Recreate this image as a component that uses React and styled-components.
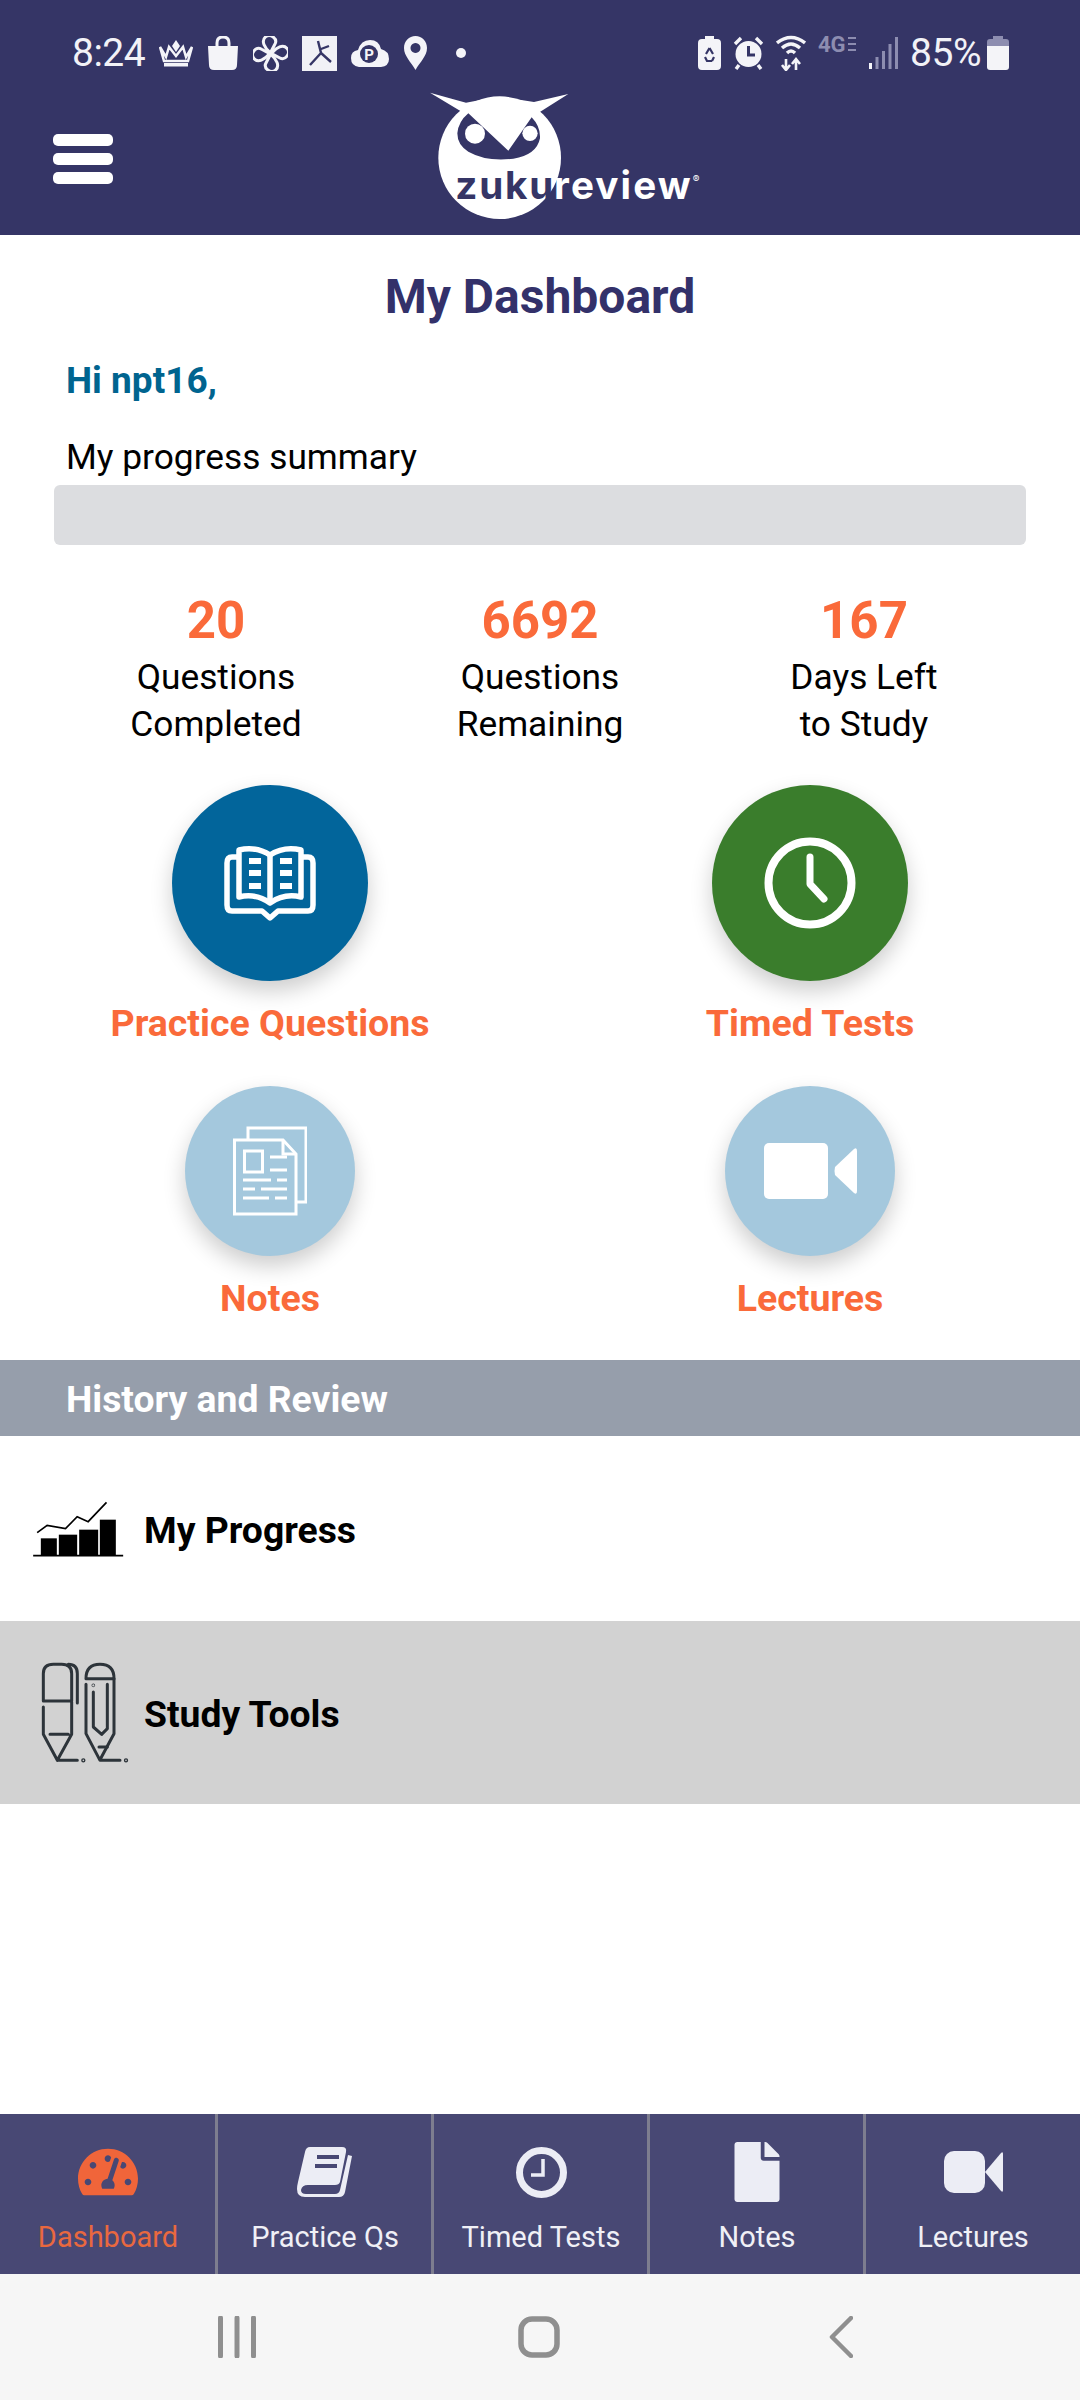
import React from 'react';
import styled, { createGlobalStyle } from 'styled-components';
import { FaTachometerAlt, FaFile } from 'react-icons/fa';

const Global = createGlobalStyle`
  html, body { margin: 0; padding: 0; background: #fff; }
  * { box-sizing: border-box; }
  body { font-family: Roboto, "Liberation Sans", sans-serif; }
`;

const Page = styled.div`
  width: 1080px; height: 2400px; display: flex; flex-direction: column; background: #fff; overflow: hidden;
`;
const Header = styled.header`
  height: 235px; background: #353566; display: flex; flex-direction: column; flex: none;
`;
const StatusBar = styled.div`
  height: 90px; padding: 34px 71px 18px 72px; display: flex; justify-content: space-between; align-items: center; color: #f4f4f8;
`;
const StatusGroup = styled.div`
  display: flex; align-items: center; gap: ${p => p.$gap || 14}px;
`;
const StatusText = styled.span`
  font-size: 39px; line-height: 38px; font-weight: 400; letter-spacing: -0.5px; color: #f2f2f7;
  margin-right: ${p => p.$tight || 0}px;
`;
const StatusSvg = styled.svg`
  display: block; flex: none;
`;
const NavRow = styled.div`
  height: 145px; display: flex; align-items: flex-start;
`;
const Burger = styled.div`
  width: 60px; margin: 44px 0 0 53px; display: flex; flex-direction: column; gap: 7px; flex: none;
`;
const BurgerBar = styled.span`
  display: block; height: 12px; border-radius: 5px; background: #fff;
`;
const LogoSvg = styled.svg`
  display: block; margin-left: 267px; flex: none;
`;
const Title = styled.h1`
  margin: 32px 0 0; font-size: 48px; line-height: 60px; font-weight: 700; text-align: center; color: #33316a;
`;
const Greeting = styled.div`
  margin: 29px 0 0 66px; font-size: 37px; line-height: 50px; font-weight: 700; color: #00648f;
`;
const Summary = styled.div`
  margin: 26px 0 0 66px; font-size: 35.3px; line-height: 50px; font-weight: 400; color: #000;
`;
const ProgressBar = styled.div`
  margin: 3px 54px 0; height: 60px; background: #dcdde0; border-radius: 6px; flex: none;
`;
const Stats = styled.div`
  margin: 48px 54px 0; display: grid; grid-template-columns: repeat(3, 1fr);
`;
const Stat = styled.div`
  text-align: center;
`;
const StatNum = styled.div`
  font-size: 51px; line-height: 56px; font-weight: 700; color: #fa6a3a;
`;
const StatLabel = styled.div`
  margin-top: 5px; font-size: 35.3px; line-height: 47px; color: #000;
`;
const Actions = styled.div`
  margin-top: 37px; display: grid; grid-template-columns: 1fr 1fr; row-gap: 38.5px;
`;
const Action = styled.div`
  display: flex; flex-direction: column; align-items: center;
`;
const Circle = styled.div`
  width: ${p => p.$size}px; height: ${p => p.$size}px; border-radius: 50%; background: ${p => p.$bg};
  box-shadow: 0 10px 22px rgba(0,0,0,.2); display: flex; align-items: center; justify-content: center;
`;
const ActionLabel = styled.div`
  margin-top: 16.5px; font-size: 37.5px; line-height: 50px; font-weight: 700; color: #fa6a3a;
`;
const SectionBar = styled.div`
  margin-top: 37.5px; height: 76px; flex: none; background: #969eab; color: #fff; padding-left: 66px;
  font-size: 37.3px; line-height: 79px; font-weight: 700;
`;
const ListRow = styled.div`
  height: ${p => p.$h}px; flex: none; display: flex; align-items: center; background: ${p => p.$bg};
  padding-left: ${p => p.$pad}px; gap: ${p => p.$gap}px;
  font-size: 37.3px; font-weight: 700; color: #000;
`;
const RowText = styled.span`
  padding-top: 2px;
`;
const Spacer = styled.div`
  flex: 1;
`;
const TabBar = styled.nav`
  height: 160px; flex: none; background: #484874; display: grid; grid-template-columns: repeat(5, 216px);
`;
const Tab = styled.div`
  display: flex; flex-direction: column; align-items: center; padding-top: 28px;
  border-left: ${p => (p.$first ? 'none' : '3px solid #7d7d8f')};
  margin-left: ${p => (p.$first ? 0 : -1)}px;
  color: ${p => (p.$active ? '#f0653a' : '#ecedf5')};
`;
const TabIcon = styled.div`
  height: 60px; display: flex; align-items: center; justify-content: center;
`;
const TabLabel = styled.div`
  margin-top: 17px; font-size: 29px; line-height: 36px;
  color: ${p => (p.$active ? '#e9683f' : '#f0f0f6')};
`;
const SystemNav = styled.div`
  height: 126px; flex: none; background: #f6f6f6; display: grid; grid-template-columns: repeat(3, 1fr);
`;
const SysSlot = styled.div`
  display: flex; align-items: center; padding-left: ${p => p.$pad}px;
`;

const ReviewLogo = () => (
  <LogoSvg width="340" height="140" viewBox="0 60 1020 420">
    <circle cx="359" cy="263" r="184" fill="#fff" />
    <path d="M150 68 L258 98 L320 86 L250 128Z" fill="#fff" />
    <path d="M565 72 L462 96 L400 86 L476 128Z" fill="#fff" />
    <path d="M265 130 L385 242 L455 142 Q482 170 480 205 Q470 255 400 266 Q320 276 265 245 Q232 225 232 190 Q235 155 265 130Z" fill="#353566" />
    <circle cx="285" cy="191" r="30" fill="#fff" />
    <circle cx="450" cy="190" r="23" fill="#fff" />
    <text x="226" y="388" fontFamily="Inter, sans-serif" fontWeight="700" fontSize="116" fill="#353566" textLength="294">zuku</text>
    <text x="522" y="388" fontFamily="Inter, sans-serif" fontWeight="700" fontSize="116" fill="#fff" textLength="410">review</text>
    <text x="938" y="340" fontFamily="Inter, sans-serif" fontSize="30" fill="#fff">®</text>
  </LogoSvg>
);

const Crown = () => (
  <StatusSvg width="34" height="28" viewBox="0 0 34 28">
    <path d="M1 8 L7 18 L10 8 L17 17 L24 8 L27 18 L33 8 L29 22 H5Z" fill="none" stroke="#f4f4f8" strokeWidth="2.5" />
    <path d="M17 1 L21 7 L17 13 L13 7Z" fill="#f4f4f8" />
    <rect x="5" y="24" width="24" height="3.5" fill="#f4f4f8" />
  </StatusSvg>
);
const Bag = () => (
  <StatusSvg width="32" height="34" viewBox="0 0 32 34">
    <path d="M10 10 V7 Q10 1 16 1 Q22 1 22 7 V10" fill="none" stroke="#f4f4f8" strokeWidth="3" />
    <path d="M1 10 H31 L30 29 Q30 34 25 34 H7 Q2 34 2 29Z" fill="#f4f4f8" />
  </StatusSvg>
);
const Fan = () => (
  <StatusSvg width="35" height="35" viewBox="0 0 35 35" fill="none" stroke="#f4f4f8" strokeWidth="3">
    <g transform="rotate(40 17.5 17.5)">
      <path d="M17 17 C9 17 2 14 3 8 C4 2 14 1 15 8 Z" />
      <path d="M18 17 C18 9 21 2 27 3 C33 4 34 14 27 15 Z" />
      <path d="M18 18 C26 18 33 21 32 27 C31 33 21 34 20 27 Z" />
      <path d="M17 18 C17 26 14 33 8 32 C2 31 1 21 8 20 Z" />
    </g>
  </StatusSvg>
);
const FigureSquare = () => (
  <StatusSvg width="35" height="35" viewBox="0 0 35 35">
    <rect width="35" height="35" fill="#f1f1f6" />
    <path d="M16 5 L19 17 L8 29 M19 17 L29 26 M19 13 L27 10" fill="none" stroke="#353566" strokeWidth="2.4" />
  </StatusSvg>
);
const CloudP = () => (
  <StatusSvg width="38" height="28" viewBox="0 0 38 28">
    <path d="M8 28 Q0 27 0 19 Q0 12 7 11 Q10 1 19 1 Q28 1 30 10 Q38 12 38 20 Q38 27 30 28Z" fill="#f4f4f8" />
    <circle cx="18" cy="15" r="9" fill="#353566" />
    <text x="18" y="20.5" textAnchor="middle" fontFamily="Roboto, sans-serif" fontWeight="700" fontSize="15" fill="#f4f4f8">P</text>
  </StatusSvg>
);
const Pin = () => (
  <StatusSvg width="25" height="34" viewBox="0 0 25 34">
    <path fillRule="evenodd" d="M12.5 34 C8 26 1 20 1 12 C1 5 6 0 12.5 0 C19 0 24 5 24 12 C24 20 17 26 12.5 34Z M12.5 7 a5 5 0 1 0 0.01 0Z" fill="#f4f4f8" />
  </StatusSvg>
);
const Dot = () => (
  <StatusSvg width="10" height="10" viewBox="0 0 10 10" style={{ marginLeft: 14 }}><circle cx="5" cy="5" r="5" fill="#f4f4f8" /></StatusSvg>
);
const BatterySaver = () => (
  <StatusSvg width="23" height="34" viewBox="0 0 23 34">
    <path d="M7 0 H16 V3 H19 Q23 3 23 7 V30 Q23 34 19 34 H4 Q0 34 0 30 V7 Q0 3 4 3 H7Z" fill="#f4f4f8" />
    <path d="M11.5 12 L8 18 M11.5 12 L15 18 M7 21 L9 25 H14 M16 21 L14 25" fill="none" stroke="#353566" strokeWidth="2.2" />
  </StatusSvg>
);
const Alarm = () => (
  <StatusSvg width="31" height="34" viewBox="0 0 31 34">
    <circle cx="15.5" cy="18" r="13" fill="#f4f4f8" />
    <path d="M15.5 10 V19 H22" fill="none" stroke="#353566" strokeWidth="3" />
    <path d="M2 8 L8 2 M29 8 L23 2 M6 29 L3 33 M25 29 L28 33" stroke="#f4f4f8" strokeWidth="3.4" />
  </StatusSvg>
);
const WifiIcon = () => (
  <StatusSvg width="30" height="36" viewBox="0 0 30 36" fill="none" stroke="#f4f4f8" strokeWidth="3.4">
    <path d="M1 8 Q15 -3 29 8" />
    <path d="M6 13 Q15 5 24 13" />
    <path d="M11 18 Q15 14 19 18" />
    <path d="M10 24 V35 M6 30 L10 35 L14 30" strokeWidth="2.6" />
    <path d="M20 35 V24 M16 29 L20 24 L24 29" strokeWidth="2.6" />
  </StatusSvg>
);
const FourG = () => (
  <StatusSvg width="39" height="24" viewBox="0 0 39 24" style={{ alignSelf: 'flex-start' }}>
    <text x="0" y="18" fontFamily="Roboto, sans-serif" fontWeight="700" fontSize="22" fill="#8d8db0">4G</text>
    <path d="M30 4 H38 M30 10 H38 M30 16 H38" stroke="#8d8db0" strokeWidth="2" />
  </StatusSvg>
);
const Signal = () => (
  <StatusSvg width="29" height="32" viewBox="0 0 29 32">
    <rect x="0" y="26" width="3" height="6" fill="#f4f4f8" />
    <rect x="6.5" y="20" width="3" height="12" fill="#8d8db0" />
    <rect x="13" y="14" width="3" height="18" fill="#8d8db0" />
    <rect x="19.5" y="7" width="3" height="25" fill="#8d8db0" />
    <rect x="26" y="0" width="3" height="32" fill="#8d8db0" />
  </StatusSvg>
);
const BatteryIcon = () => (
  <StatusSvg width="22" height="34" viewBox="0 0 22 34">
    <path d="M6 0 H16 V3 H19 Q22 3 22 6 V10 H0 V6 Q0 3 3 3 H6Z" fill="#8d8db0" />
    <path d="M0 10 H22 V31 Q22 34 19 34 H3 Q0 34 0 31Z" fill="#f4f4f8" />
  </StatusSvg>
);

const BookIcon = () => (
  <svg width="92" height="76" viewBox="0 0 92 76" fill="none" stroke="#fff" strokeWidth="5.5" strokeLinejoin="round">
    <path d="M46 10 Q32 1 15 5 V52 Q32 48 46 58 Q60 48 77 52 V5 Q60 1 46 10Z" />
    <path d="M46 10 V58" />
    <path d="M15 12 H8 Q3 12 3 18 V60 Q3 66 8 66 H38 L46 73 L54 66 H84 Q89 66 89 60 V18 Q89 12 84 12 H77" />
    <g fill="#fff" stroke="none">
      <rect x="25" y="13" width="12" height="6" /><rect x="25" y="25" width="12" height="6" /><rect x="25" y="38" width="12" height="6" />
      <rect x="56" y="13" width="12" height="6" /><rect x="56" y="25" width="12" height="6" /><rect x="56" y="38" width="12" height="6" />
    </g>
  </svg>
);
const ClockIcon = () => (
  <svg width="92" height="92" viewBox="0 0 92 92" fill="none" stroke="#fff">
    <circle cx="46" cy="46" r="41.5" strokeWidth="8" />
    <path d="M46 20 V47 L60 62" strokeWidth="7" strokeLinecap="round" strokeLinejoin="round" />
  </svg>
);
const NotesIcon = () => (
  <svg width="74" height="90" viewBox="0 0 74 90" fill="none" stroke="#fff" strokeWidth="3">
    <path d="M15 13 V2 H73 V76 H64" />
    <path d="M1.5 14 H50 L63 28 V88 H1.5Z" />
    <path d="M50 14 V28 H63" />
    <rect x="11.5" y="25" width="18" height="21" />
    <path d="M37 31 H54 M37 44 H54 M10 54 H38 M44 54 H54 M10 63 H22 M28 63 H54 M10 72 H36 M42 72 H54" />
  </svg>
);
const VideoIcon = () => (
  <svg width="93" height="56" viewBox="0 0 93 56" fill="#fff">
    <rect x="0" y="0" width="64" height="56" rx="5" />
    <path d="M71 24 L90 6 Q93 4 93 8 V48 Q93 52 90 50 L71 32 Q70 28 71 24Z" />
  </svg>
);
const ProgressIcon = () => (
  <svg width="91" height="60" viewBox="100 115 272 180">
    <rect x="123" y="233" width="48" height="52" /><rect x="177" y="222" width="55" height="63" />
    <rect x="238" y="207" width="57" height="78" /><rect x="300" y="177" width="48" height="108" />
    <path d="M100 285 H370" stroke="#000" strokeWidth="5" />
    <path d="M112 216 L142 194 L197 204 L232 168 L265 183 L320 125" fill="none" stroke="#000" strokeWidth="5" />
  </svg>
);
const ToolsIcon = () => (
  <svg width="90" height="102" viewBox="120 605 270 306" fill="none" stroke="#2d343a" strokeWidth="9" strokeLinecap="round" strokeLinejoin="round">
    <path d="M130 722 V640 Q130 612 160 612 H185 Q215 612 215 640 V722 H130" />
    <path d="M205 612 Q232 612 232 640 V728" />
    <path d="M130 740 V822 L172 900 H232 M215 725 V822 L172 900 M150 822 H205" />
    <path d="M258 655 Q258 612 300 612 Q342 612 342 655Z" />
    <path d="M258 672 V820 L300 900 H360 M342 655 V820 L300 898" />
    <path d="M280 695 V800 L305 822 L322 805 V672 M297 860 H322" />
    <circle cx="250" cy="900" r="2" /><circle cx="378" cy="900" r="2" /><circle cx="280" cy="675" r="1" />
  </svg>
);
const TabClock = () => (
  <svg width="51" height="51" viewBox="0 0 51 51" fill="none" stroke="currentColor">
    <circle cx="25.5" cy="25.5" r="22" strokeWidth="7" />
    <path d="M27 12 V28 H15" strokeWidth="3.5" />
  </svg>
);
const TabBook = () => (
  <svg width="56" height="52" viewBox="0 0 56 52">
    <path fill="currentColor" d="M13 1 H45 Q50 1 49 6 L43 36 Q42 39 38 39 H11 Q5 39 4 44 Q4 48 9 48 H38 Q42 48 43 44 L51 9 L55 10 L48 46 Q47 51 42 51 H8 Q0 51 0 43 Q0 40 1 36 L8 6 Q9 1 13 1Z" />
    <path d="M20 11 H42 M18 20 H40" stroke="#484874" strokeWidth="4" />
  </svg>
);
const TabVideo = () => (
  <svg width="59" height="42" viewBox="0 0 59 42" fill="currentColor">
    <rect x="0" y="0" width="41" height="42" rx="10" />
    <path d="M41 21 L57 2 Q59 0 59 3 V39 Q59 42 57 40Z" />
  </svg>
);

const stats = [
  ['20', 'Questions', 'Completed'],
  ['6692', 'Questions', 'Remaining'],
  ['167', 'Days Left', 'to Study'],
];
const tabs = [
  ['Dashboard', <FaTachometerAlt key="g" style={{ width: 60, height: 54 }} />],
  ['Practice Qs', <TabBook key="b" />],
  ['Timed Tests', <TabClock key="c" />],
  ['Notes', <FaFile key="f" style={{ width: 52, height: 60 }} />],
  ['Lectures', <TabVideo key="v" />],
];

export default function App() {
  return (
    <Page>
      <Global />
      <Header>
        <StatusBar>
          <StatusGroup>
            <StatusText>8:24</StatusText>
            <Crown /><Bag /><Fan /><FigureSquare /><CloudP /><Pin /><Dot />
          </StatusGroup>
          <StatusGroup $gap={12}>
            <BatterySaver /><Alarm /><WifiIcon /><FourG /><Signal />
            <StatusText $tight={-6}>85%</StatusText><BatteryIcon />
          </StatusGroup>
        </StatusBar>
        <NavRow>
          <Burger><BurgerBar /><BurgerBar /><BurgerBar /></Burger>
          <ReviewLogo />
        </NavRow>
      </Header>
      <Title>My Dashboard</Title>
      <Greeting>Hi npt16,</Greeting>
      <Summary>My progress summary</Summary>
      <ProgressBar />
      <Stats>
        {stats.map(([n, a, b]) => (
          <Stat key={n}><StatNum>{n}</StatNum><StatLabel>{a}<br />{b}</StatLabel></Stat>
        ))}
      </Stats>
      <Actions>
        <Action><Circle $size={196} $bg="#02659b"><BookIcon /></Circle><ActionLabel>Practice Questions</ActionLabel></Action>
        <Action><Circle $size={196} $bg="#3a7d2c"><ClockIcon /></Circle><ActionLabel>Timed Tests</ActionLabel></Action>
        <Action><Circle $size={170} $bg="#a4c8dd"><NotesIcon /></Circle><ActionLabel>Notes</ActionLabel></Action>
        <Action><Circle $size={170} $bg="#a4c8dd"><VideoIcon /></Circle><ActionLabel>Lectures</ActionLabel></Action>
      </Actions>
      <SectionBar>History and Review</SectionBar>
      <ListRow $h={185} $bg="#fff" $pad={33} $gap={20}><ProgressIcon /><RowText>My Progress</RowText></ListRow>
      <ListRow $h={183} $bg="#d2d2d2" $pad={40} $gap={14}><ToolsIcon /><RowText>Study Tools</RowText></ListRow>
      <Spacer />
      <TabBar>
        {tabs.map(([label, icon], i) => (
          <Tab key={label} $first={i === 0} $active={i === 0}>
            <TabIcon>{icon}</TabIcon>
            <TabLabel $active={i === 0}>{label}</TabLabel>
          </Tab>
        ))}
      </TabBar>
      <SystemNav>
        <SysSlot $pad={218}>
          <svg width="38" height="42" viewBox="0 0 38 42" stroke="#8f8f8f" strokeWidth="5" strokeLinecap="round"><path d="M2.5 2 V40 M19 2 V40 M35.5 2 V40" /></svg>
        </SysSlot>
        <SysSlot $pad={158}>
          <svg width="42" height="42" viewBox="0 0 42 42" fill="none" stroke="#8f8f8f" strokeWidth="5.5"><rect x="3" y="3" width="36" height="36" rx="11" /></svg>
        </SysSlot>
        <SysSlot $pad={109}>
          <svg width="24" height="42" viewBox="0 0 24 42" fill="none" stroke="#8f8f8f" strokeWidth="4.5" strokeLinecap="round" strokeLinejoin="round"><path d="M22 2 L3 21 L22 40" /></svg>
        </SysSlot>
      </SystemNav>
    </Page>
  );
}
